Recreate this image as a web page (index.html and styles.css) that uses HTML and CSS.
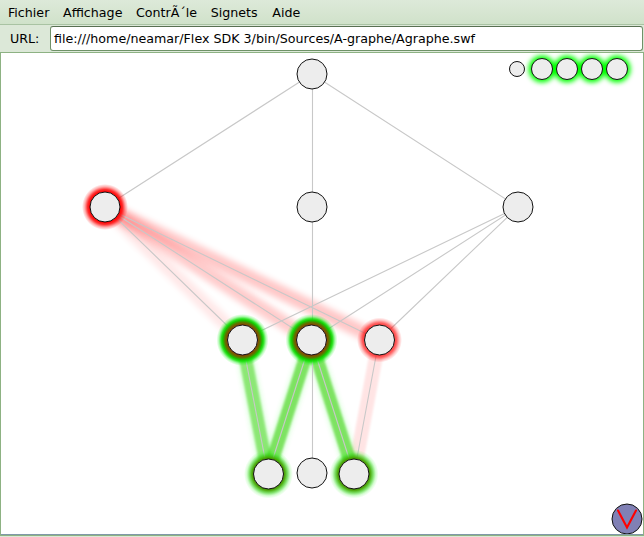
FILE: index.html
```html
<!DOCTYPE html>
<html lang="fr">
<head>
<meta charset="utf-8">
<title>Agraphe</title>
<link rel="stylesheet" href="styles.css">
</head>
<body>
<div class="window">
  <nav class="menubar">
    <span>Fichier</span><span>Affichage</span><span>ContrÃ´le</span><span>Signets</span><span>Aide</span>
  </nav>
  <div class="urlbar">
    <span class="label">URL:</span>
    <div class="field"><span>file:///home/neamar/Flex SDK 3/bin/Sources/A-graphe/Agraphe.swf</span></div>
  </div>
  <main class="stage">
    <svg class="graph" viewBox="1 53 642 481" width="642" height="481">
      <defs>
        <filter id="soft" color-interpolation-filters="sRGB" filterUnits="userSpaceOnUse" x="0" y="40" width="644" height="500"><feGaussianBlur stdDeviation="2.8"/></filter>
        <filter id="wide" color-interpolation-filters="sRGB" filterUnits="userSpaceOnUse" x="0" y="40" width="644" height="500"><feGaussianBlur stdDeviation="3.3"/></filter>
        <filter id="crisp" color-interpolation-filters="sRGB" filterUnits="userSpaceOnUse" x="0" y="40" width="644" height="500"><feGaussianBlur stdDeviation="1.2"/></filter>
        <radialGradient id="glow-red"><stop offset=".66" stop-color="#f00"/><stop offset=".76" stop-color="#f00" stop-opacity=".82"/><stop offset=".88" stop-color="#f00" stop-opacity=".32"/><stop offset="1" stop-color="#f00" stop-opacity="0"/></radialGradient>
        <radialGradient id="glow-green"><stop offset=".58" stop-color="#944000"/><stop offset=".68" stop-color="#5a7600"/><stop offset=".76" stop-color="#13c800"/><stop offset=".82" stop-color="#0de000" stop-opacity=".85"/><stop offset=".91" stop-color="#1e1" stop-opacity=".32"/><stop offset="1" stop-color="#2f2" stop-opacity="0"/></radialGradient>
        <radialGradient id="glow-olive"><stop offset=".6" stop-color="#478800"/><stop offset=".68" stop-color="#41a800" stop-opacity=".92"/><stop offset=".78" stop-color="#3c1" stop-opacity=".62"/><stop offset=".89" stop-color="#3e2" stop-opacity=".2"/><stop offset="1" stop-color="#3f3" stop-opacity="0"/></radialGradient>
      </defs>
      <g class="red-beams">
        <path class="w1" d="M105 207L242 340" filter="url(#wide)"/>
        <path class="w2" d="M105 207L311 340" filter="url(#wide)"/>
        <path class="w3" d="M105 207L379 340" filter="url(#wide)"/>
        <path class="w4" d="M379 340L354 474" filter="url(#crisp)"/>
      </g>
      <g class="green-halos">
        <path d="M242 340L268 474" filter="url(#soft)"/>
        <path d="M311 340L268 474" filter="url(#soft)"/>
        <path d="M311 340L354 474" filter="url(#soft)"/>
      </g>
      <g class="green-beams">
        <path class="pale" d="M242 340L268 474" filter="url(#crisp)"/>
        <path d="M311 340L268 474" filter="url(#crisp)"/>
        <path d="M311 340L354 474" filter="url(#crisp)"/>
      </g>
      <path class="edges" d="M312 74L105 207M312.5 74V473M312 74L518 207M105 207L242 340M105 207L311 340M105 207L379 340M518 207L242 340M518 207L311 340M518 207L379 340M242 340L268 474M311 340L268 474M311 340L354 474M379 340L354 474"/>
      <circle fill="url(#glow-red)" cx="105" cy="207" r="23"/>
      <circle class="faint" fill="url(#glow-red)" cx="379.5" cy="340" r="22.5"/>
      <circle fill="url(#glow-green)" cx="242.5" cy="340" r="26"/>
      <circle fill="url(#glow-green)" cx="311.5" cy="340" r="26"/>
      <circle fill="url(#glow-olive)" cx="268.5" cy="474" r="24.5"/>
      <circle fill="url(#glow-olive)" cx="354" cy="474" r="24.5"/>
      <g class="lime" filter="url(#soft)">
        <circle cx="542" cy="69" r="13.5"/><circle cx="567" cy="69" r="13.5"/><circle cx="592" cy="69" r="13.5"/><circle cx="617" cy="69" r="13.5"/>
      </g>
      <g class="nodes">
        <circle cx="312" cy="74" r="15"/><circle cx="105" cy="207" r="15"/><circle cx="312" cy="207" r="15"/><circle cx="518" cy="207" r="15"/>
        <circle cx="242.5" cy="340" r="15"/><circle cx="311.5" cy="340" r="15"/><circle cx="379.5" cy="340" r="15"/>
        <circle cx="268.5" cy="474" r="15"/><circle cx="312" cy="473" r="15"/><circle cx="354" cy="474" r="15"/>
        <circle cx="517" cy="69" r="7.5"/><circle cx="542" cy="69" r="10.5"/><circle cx="567" cy="69" r="10.5"/><circle cx="592" cy="69" r="10.5"/><circle cx="617" cy="69" r="10.5"/>
      </g>
      <circle class="toggle" cx="627" cy="519" r="15"/>
      <path class="chevron" d="M618 510.5L627 527.5L636 510.5"/>
    </svg>
  </main>
</div>
</body>
</html>
```

FILE: styles.css
```css
* { box-sizing: border-box; }
body { margin: 0; background: #dce8d8; font: 12.67px "DejaVu Sans", sans-serif; color: #000; overflow: hidden; }
.window { width: 644px; height: 537px; display: flex; flex-direction: column; }
.menubar { height: 25px; padding-left: 8px; display: flex; align-items: center; gap: 13.6px; background: linear-gradient(#dde9d9, #d0e2ca); border-bottom: 1px solid #a9c3a3; white-space: nowrap; }
.menubar span:last-child { margin-left: 1px; }
.urlbar { height: 27px; display: flex; align-items: center; padding: 0 1px 0 10px; background: #dce8d8; }
.label { width: 40px; }
.field { flex: 1; height: 25px; border: 1px solid #6f9168; border-top-color: #587052; border-radius: 3px; background: #fff; padding-left: 3px; line-height: 24px; white-space: nowrap; }
.stage { height: 484px; border: 1px solid #8db283; background: #fff; }
.graph { display: block; border-bottom: 1px solid #8099a9; height: 482px; }
.edges { fill: none; stroke: #c8c8c8; stroke-width: 1.1; }
.red-beams path { fill: none; stroke: #f00; stroke-width: 14; }
.red-beams .w1 { opacity: .09; }
.red-beams .w2 { opacity: .2; }
.red-beams .w3 { opacity: .22; }
.red-beams .w4 { opacity: .1; }
.green-halos path { fill: none; stroke: #3f3; stroke-width: 16; opacity: .2; }
.green-beams path { fill: none; stroke: #3c0; stroke-width: 13; opacity: .54; }
.green-beams .pale { opacity: .45; }
.faint { opacity: .75; }
.lime circle { fill: #0f0; }
.nodes circle { fill: #ededed; stroke: #111; stroke-width: 1; }
.toggle { fill: #8080b5; stroke: #111; }
.chevron { fill: none; stroke: #f00; stroke-width: 2.1; stroke-linecap: round; }
```
